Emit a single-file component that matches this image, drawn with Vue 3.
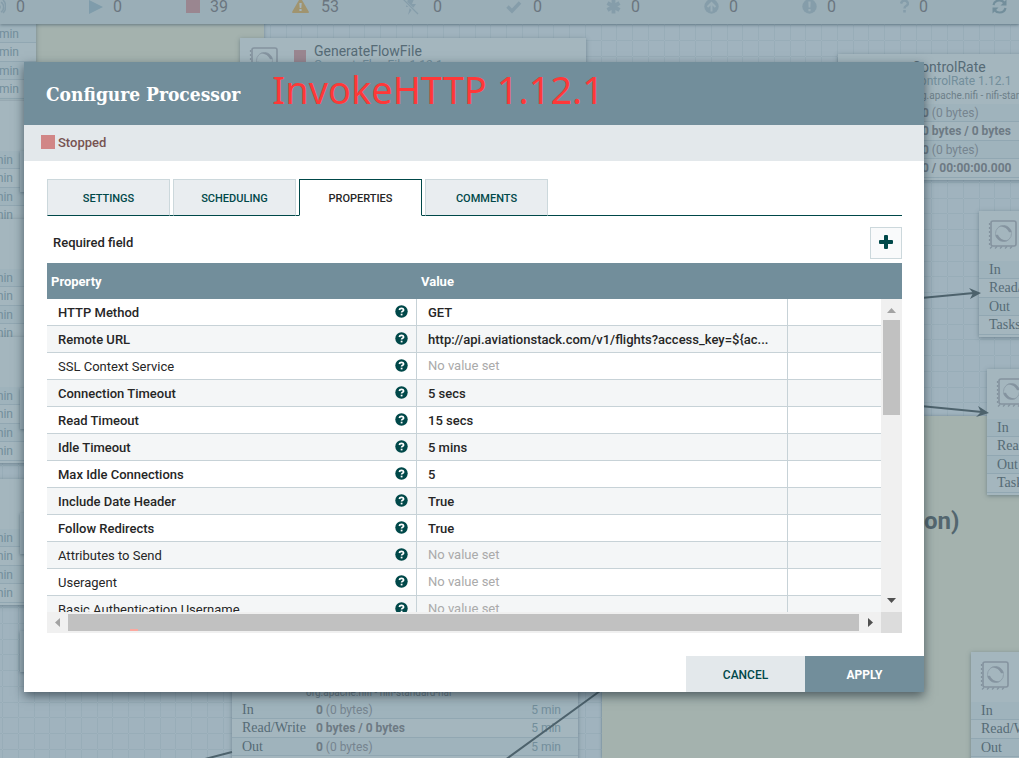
<script setup>
const counters = [
  { icon: 'transmit', value: '0' },
  { icon: 'play', value: '0' },
  { icon: 'stop', value: '39' },
  { icon: 'warning', value: '53' },
  { icon: 'disabled', value: '0' },
  { icon: 'check', value: '0' },
  { icon: 'asterisk', value: '0' },
  { icon: 'up', value: '0' },
  { icon: 'exclaim', value: '0' },
  { icon: 'question', value: '0' },
  { icon: 'refresh', value: '' },
]

const fullRows = [
  { label: 'In', strong: '0', rest: '(0 bytes)' },
  { label: 'Read/Write', strong: '0 bytes / 0 bytes', rest: '' },
  { label: 'Out', strong: '0', rest: '(0 bytes)' },
  { label: 'Tasks/Time', strong: '0 / 00:00:00.000', rest: '' },
]

const bundle = 'org.apache.nifi - nifi-standard-nar'

const processors = [
  { id: 'gen', x: 240, y: 38, name: 'GenerateFlowFile', type: 'GenerateFlowFile 1.12.1', show: [] },
  { id: 'rate', x: 838, y: 54, name: 'ControlRate', type: 'ControlRate 1.12.1', bundle, show: ['value'] },
  { id: 'r1', x: 979, y: 211, show: ['label'] },
  { id: 'r2', x: 987, y: 369, show: ['label'] },
  { id: 'r3', x: 971, y: 652, show: ['label'] },
  { id: 'mid', x: 232, y: 651, bundle, show: ['label', 'value', 'time'] },
  { id: 'l1', x: -310, y: -25, show: ['time'] },
  { id: 'l2', x: -316, y: 101, show: ['time'] },
  { id: 'l3', x: -316, y: 219, show: ['time'] },
  { id: 'l4', x: -316, y: 337, show: ['time'] },
  { id: 'l5', x: -316, y: 479, show: ['time'] },
]

const queues = [151, 388, 513, 631]

const tabs = ['Settings', 'Scheduling', 'Properties', 'Comments']

const properties = [
  { name: 'HTTP Method', value: 'GET', required: true },
  { name: 'Remote URL', value: 'http://api.aviationstack.com/v1/flights?access_key=${ac...', required: true },
  { name: 'SSL Context Service', value: '', required: false },
  { name: 'Connection Timeout', value: '5 secs', required: true },
  { name: 'Read Timeout', value: '15 secs', required: true },
  { name: 'Idle Timeout', value: '5 mins', required: true },
  { name: 'Max Idle Connections', value: '5', required: true },
  { name: 'Include Date Header', value: 'True', required: true },
  { name: 'Follow Redirects', value: 'True', required: true },
  { name: 'Attributes to Send', value: '', required: false },
  { name: 'Useragent', value: '', required: false },
  { name: 'Basic Authentication Username', value: '', required: false },
]
</script>

<template>
  <div class="stage">
    <div class="canvas" aria-hidden="true">
      <svg class="fill" width="100%" height="100%">
        <defs>
          <pattern id="mesh" x="2" y="40" width="63" height="63" patternUnits="userSpaceOnUse">
            <path d="M0 0h1v63h-1zM16 0h1v63h-1zM32 0h1v63h-1zM47 0h1v63h-1zM0 0v1h63v-1zM0 16v1h63v-1zM0 32v1h63v-1zM0 47v1h63v-1z" fill="#98adb8" />
          </pattern>
        </defs>
        <rect width="100%" height="100%" fill="url(#mesh)" />
      </svg>
      <div class="note note-top"></div>
      <div class="note note-main"><span>on)</span></div>

      <div v-for="p in processors" :key="p.id" class="node" :style="{ left: p.x + 'px', top: p.y + 'px' }">
        <div class="node-head">
          <svg class="node-icon" width="29" height="30" viewBox="0 0 29 30" fill="none">
            <rect x="3" y="1" width="25" height="25" rx="2" stroke="#84939f" stroke-width="1.6" />
            <path d="M1.500 3v24" stroke="#84939f" stroke-width="1.200" stroke-dasharray="2 2" />
            <path d="M2 28.500l2-2M7 28.500l2-2M12 28.500l2-2M17 28.500l2-2M22 28.500l2-2" stroke="#84939f" stroke-width="1.200" />
            <circle cx="15.500" cy="13.500" r="8" stroke="#8f9faa" stroke-width="1" />
            <path d="M10 6.800c6-3 12-.5 13.500 5.200l-2.500.3c-1.500-4-6-6.500-11-5.500zM21 20.200c-6 3-12 .5-13.500-5.200l2.500-.3c1.500 4 6 6.500 11 5.500z" fill="#84939f" />
          </svg>
          <span class="node-state"></span>
          <div class="node-names">
            <div class="node-name">{{ p.name }}</div>
            <div class="node-type">{{ p.type }}</div>
            <div class="node-bundle">{{ p.bundle }}</div>
          </div>
        </div>
        <div class="node-rows">
          <div v-for="r in fullRows" :key="r.label" class="node-row">
            <span class="node-label"><template v-if="p.show.includes('label')">{{ r.label }}</template></span>
            <span class="node-value"><template v-if="p.show.includes('value')"><b>{{ r.strong }}</b> {{ r.rest }}</template></span>
            <span class="node-time"><template v-if="p.show.includes('time')">5 min</template></span>
          </div>
        </div>
      </div>
      <div v-for="q in queues" :key="q" class="queue" :style="{ top: q + 'px' }"></div>

      <svg class="fill" width="100%" height="100%">
        <g stroke="#4d626c" stroke-width="2" fill="none">
          <path d="M900 300L974 293M900 404L982 412M600 691L505 760M205 759L232 752" />
        </g>
        <path d="M981 293l-12-5 4 5-3 6zM989 413l-11-7 3 6-5 5z" fill="#4d626c" />
      </svg>
    </div>

    <div class="statusbar">
      <div v-for="c in counters" :key="c.icon" class="counter">
        <svg v-if="c.icon === 'transmit'" width="15" height="16" viewBox="0 0 15 16" fill="none" stroke="#859daa" stroke-width="1.500">
          <circle cx="7" cy="8" r="2" /><path d="M10 3a6 6 0 0 1 0 10M12 1a9 9 0 0 1 0 13" />
        </svg>
        <svg v-else-if="c.icon === 'play'" width="14" height="16" viewBox="0 0 14 16"><path d="M0 1l14 7-14 7z" fill="#7f9cab" /></svg>
        <svg v-else-if="c.icon === 'stop'" width="14" height="16" viewBox="0 0 14 16"><path d="M0 0h14v14H0z" fill="#9a8690" /></svg>
        <svg v-else-if="c.icon === 'warning'" width="19" height="16" viewBox="0 0 19 16">
          <path d="M7.300 0.500q1.200-1.500 2.400 0l7 12q.5 1.500-1 1.500H1.300q-1.500 0-1-1.500z" fill="#a0946f" />
          <path d="M7.300 4h2.400l-.4 5H7.700zM7.400 10h2.200v2H7.400z" fill="#a4b6be" />
        </svg>
        <svg v-else-if="c.icon === 'disabled'" width="20" height="16" viewBox="0 0 20 16">
          <path d="M5 0h6L9 5h4l-8 11 2-8H3z" fill="#859daa" /><path d="M0 1l15 14" stroke="#9aaeb7" stroke-width="3" /><path d="M0 0l15 15" stroke="#859daa" stroke-width="1.200" />
        </svg>
        <svg v-else-if="c.icon === 'check'" width="17" height="16" viewBox="0 0 17 16"><path d="M1.500 7.500l4.500 4.500 8-8.500" fill="none" stroke="#859daa" stroke-width="3.400" /></svg>
        <svg v-else-if="c.icon === 'asterisk'" width="15" height="16" viewBox="0 0 15 16"><path d="M7.500 .5v14M1.500 4l12 7M13.500 4l-12 7" stroke="#859daa" stroke-width="3.800" /></svg>
        <svg v-else-if="c.icon === 'up'" width="15" height="16" viewBox="0 0 15 16">
          <circle cx="7.500" cy="7.500" r="7.200" fill="#859daa" /><path d="M7.500 12.500V4M3.500 8l4-4 4 4" fill="none" stroke="#9aaeb7" stroke-width="2" />
        </svg>
        <svg v-else-if="c.icon === 'exclaim'" width="15" height="16" viewBox="0 0 15 16">
          <circle cx="7.500" cy="7.500" r="7.200" fill="#859daa" /><path d="M6.300 2.500h2.400l-.3 6H6.600zM6.400 10h2.200v2.300H6.400z" fill="#9aaeb7" />
        </svg>
        <svg v-else-if="c.icon === 'question'" width="9" height="16" viewBox="0 0 9 16">
          <path d="M1 4.500q1-3 3.500-3T8 4.300Q8 6 6 7 4.500 7.800 4.500 9.500" fill="none" stroke="#859daa" stroke-width="2.400" /><path d="M3.200 11h2.600v2.500H3.200z" fill="#859daa" />
        </svg>
        <svg v-else width="15" height="16" viewBox="0 0 15 16">
          <path d="M1.500 6q1-4.500 6-4.500 3 0 4.500 2M13.500 9q-1 4.500-6 4.500-3 0-4.500-2" fill="none" stroke="#728e9b" stroke-width="2.200" />
          <path d="M14.500 .5v6h-6zM.5 14.500v-6h6z" fill="#728e9b" />
        </svg>
        <span>{{ c.value }}</span>
      </div>
    </div>

    <div class="overlay">
      <section class="dialog" role="dialog" aria-labelledby="dialog-title">
        <header class="dialog-head">
          <h1 id="dialog-title">Configure Processor</h1>
          <span class="remark">InvokeHTTP 1.12.1</span>
        </header>
        <div class="run-state"><span class="run-square"></span>Stopped</div>

        <div class="dialog-body">
          <div class="tabs" role="tablist">
            <button v-for="t in tabs" :key="t" type="button" role="tab" class="tab" :class="{ active: t === 'Properties' }" :aria-selected="t === 'Properties'">{{ t }}</button>
          </div>
          <div class="toolbar">
            <span class="required-note">Required field</span>
            <button type="button" class="add" aria-label="Add property">
              <svg width="14" height="14" viewBox="0 0 14 14"><path d="M5 1q0-1 1-1h2q1 0 1 1v4h4q1 0 1 1v2q0 1-1 1H9v4q0 1-1 1H6q-1 0-1-1V9H1Q0 9 0 8V6q0-1 1-1h4z" fill="#004849" /></svg>
            </button>
          </div>

          <div class="grid">
            <div class="viewport">
              <table>
                <colgroup><col class="c-name" /><col class="c-value" /><col class="c-actions" /></colgroup>
                <thead>
                  <tr><th scope="col">Property</th><th scope="col">Value</th><th></th></tr>
                </thead>
                <tbody>
                  <tr v-for="p in properties" :key="p.name" :class="{ required: p.required }">
                    <td>
                      <div class="name-cell">
                        <span>{{ p.name }}</span>
                        <svg width="13" height="13" viewBox="0 0 13 13">
                          <circle cx="6.500" cy="6.500" r="6.200" fill="#004849" />
                          <path d="M4.300 5q.3-1.700 2.200-1.700T8.600 4.900q0 .9-1.100 1.400-.9.500-.9 1.300" fill="none" stroke="#fff" stroke-width="1.700" />
                          <path d="M5.700 8.700h1.800v1.700H5.700z" fill="#fff" />
                        </svg>
                      </div>
                    </td>
                    <td class="value" :class="{ unset: !p.value }">{{ p.value || 'No value set' }}</td>
                    <td></td>
                  </tr>
                </tbody>
              </table>
            </div>
            <div class="vbar">
              <svg width="21" height="21" viewBox="0 0 21 21"><path d="M6 14l4.500-5 4.500 5z" fill="#a3a3a3" /></svg>
              <div class="vtrack"><div class="vthumb"></div></div>
              <svg width="21" height="21" viewBox="0 0 21 21"><path d="M6 7h9l-4.500 5z" fill="#505050" /></svg>
            </div>
            <div class="hbar">
              <svg width="21" height="21" viewBox="0 0 21 21"><path d="M13 6v9l-5-4.500z" fill="#a3a3a3" /></svg>
              <div class="hthumb"><span class="speck"></span></div>
              <svg width="22" height="21" viewBox="0 0 22 21"><path d="M9 6v9l5-4.500z" fill="#505050" /></svg>
            </div>
            <div class="corner"></div>
          </div>
        </div>

        <footer class="actions">
          <button type="button" class="cancel">Cancel</button>
          <button type="button" class="apply">Apply</button>
        </footer>
      </section>
    </div>
  </div>
</template>

<style>
html,
body {
  margin: 0;
  background: #a0b3be;
}
</style>

<style scoped>
* {
  box-sizing: border-box;
}
.stage {
  position: relative;
  min-height: 100vh;
  overflow: hidden;
  font-family: Roboto, "Liberation Sans", sans-serif;
  font-size: 13px;
  color: #262626;
}
.canvas,
.fill {
  position: absolute;
  inset: 0;
}
.canvas {
  overflow: hidden;
}
.note {
  position: absolute;
  background: #a4b2ae;
  box-shadow: 0 0 3px rgba(70, 95, 110, 0.5);
}
.note-top {
  left: 36px;
  top: 0;
  width: 228px;
  height: 160px;
}
.note-main {
  left: 602px;
  right: 0;
  top: 416px;
  bottom: 0;
}
.note-main span {
  position: absolute;
  left: 322px;
  top: 90px;
  font-size: 24px;
  line-height: 30px;
  font-weight: 700;
  color: #53666f;
}
.node {
  position: absolute;
  width: 346px;
  background: #a4b6be;
  box-shadow: 0 1px 4px rgba(60, 85, 100, 0.5);
  padding-bottom: 2px;
}
.node-head {
  display: flex;
  height: 50px;
  padding: 4px 0 0 9px;
}
.node-icon {
  margin-top: 5px;
}
.node-state {
  width: 12px;
  height: 12px;
  margin: 8px 8px 0 16px;
  background: #9a8690;
}
.node-names {
  white-space: nowrap;
}
.node-name {
  height: 16px;
  font-size: 14px;
  line-height: 18px;
  color: #566b76;
}
.node-type {
  height: 14px;
  font-size: 12px;
  line-height: 15px;
  color: #728e9b;
}
.node-bundle {
  font-size: 10px;
  line-height: 16px;
  color: #6d7f89;
}
.node-rows {
  display: grid;
  grid-template-rows: 18px 19px 18px 19px;
}
.node-row {
  display: grid;
  grid-template-columns: 74px 1fr auto;
  align-items: center;
  padding: 0 17px 0 10px;
  border-bottom: 1px solid #91a7b2;
  font-size: 12px;
  color: #76848f;
  white-space: nowrap;
}
.node-row:nth-child(odd) {
  background: #9fb3bc;
}
.node-row b {
  font-weight: 700;
  color: #6d7a84;
}
.node-label {
  font-family: "Liberation Serif", serif;
  font-size: 14px;
  line-height: 16px;
  color: #566b76;
}
.node-time {
  color: #728e9b;
}
.queue {
  position: absolute;
  left: 20px;
  width: 200px;
  height: 41px;
  background: #9fb2bb;
  box-shadow: 0 1px 3px rgba(60, 85, 100, 0.5);
}
.statusbar {
  position: relative;
  display: flex;
  align-items: flex-start;
  gap: 64px;
  height: 24px;
  background: #9aaeb7;
  box-shadow: 0 1px 3px rgba(60, 85, 100, 0.6);
}
.counter {
  display: flex;
  flex: none;
  align-items: center;
  gap: 10px;
  margin-top: -1px;
  font-size: 16px;
  line-height: 16px;
  color: #6b7680;
}
.counter:first-child {
  margin-left: -9px;
}
.overlay {
  position: relative;
  display: flex;
  padding: 38px 95px 66px 24px;
}
.dialog {
  flex: 1;
  min-width: 0;
  background: #fff;
  box-shadow: 0 4px 10px rgba(20, 35, 45, 0.6);
}
.dialog-head {
  display: flex;
  align-items: center;
  gap: 32px;
  height: 63px;
  padding: 0 22px;
  background: #728e9b;
  white-space: nowrap;
}
h1 {
  margin: 0;
  font-family: "DejaVu Serif Condensed", "DejaVu Serif", serif;
  font-size: 19px;
  line-height: 24px;
  font-weight: 700;
  color: #fff;
}
.remark {
  font-family: "Noto Sans", sans-serif;
  font-size: 38px;
  line-height: 52px;
  padding-bottom: 10px;
  color: #ff3838;
}
.run-state {
  display: flex;
  align-items: center;
  gap: 3px;
  height: 36px;
  padding: 0 17px 2px;
  background: #e3e8eb;
  font-weight: 500;
  color: #775351;
}
.run-square {
  width: 14px;
  height: 14px;
  background: #d18686;
}
.dialog-body {
  padding: 18px 22px 23px 23px;
}
.tabs {
  display: flex;
  gap: 3px;
  border-bottom: 1px solid #004849;
}
.tab {
  width: 123px;
  height: 37px;
  margin-bottom: -1px;
  padding: 2px 0 0;
  border: 1px solid #ccd8dc;
  border-bottom-color: #004849;
  background: #e9edf0;
  font: 500 11px/16px Roboto, sans-serif;
  text-transform: uppercase;
  color: #004849;
}
.tab.active {
  border-color: #004849;
  border-bottom-color: #fff;
  background: #fff;
  color: #262626;
}
.toolbar {
  display: flex;
  justify-content: space-between;
  align-items: center;
  height: 47px;
  padding: 7px 0 0 6px;
}
.required-note {
  font-weight: 500;
  padding-bottom: 2px;
}
.add {
  display: flex;
  align-items: center;
  justify-content: center;
  width: 32px;
  height: 32px;
  padding: 0 0 2px;
  border: 1px solid #ccd8dc;
  background: #f9fafb;
}
.grid {
  display: grid;
  grid-template-columns: 1fr 21px;
  background: #728e9b;
}
.viewport {
  height: 349px;
  min-width: 0;
  overflow: hidden;
}
table {
  width: 100%;
  table-layout: fixed;
  border-collapse: separate;
  border-spacing: 0;
  background: #fff;
}
.c-name {
  width: 370px;
}
.c-value {
  width: 371px;
}
.c-actions {
  width: 93px;
}
th {
  height: 36px;
  padding: 0 4px;
  background: #728e9b;
  color: #fff;
  font-weight: 700;
  text-align: left;
}
td {
  height: 27px;
  padding: 0 5px 0 11px;
  border-right: 1px solid #c7d2d7;
  border-bottom: 1px solid #c7d2d7;
  overflow: hidden;
  text-overflow: ellipsis;
  white-space: nowrap;
}
td:last-child {
  border-right: 0;
}
tbody tr:nth-child(even) {
  background: #f4f6f7;
}
.required td {
  font-weight: 500;
}
.name-cell {
  display: flex;
  align-items: center;
  justify-content: space-between;
  padding-right: 3px;
}
.name-cell svg {
  margin-bottom: 2px;
}
td.value.unset {
  padding-bottom: 2px;
  color: #aaa;
}
.vbar {
  display: flex;
  flex-direction: column;
  margin-top: 36px;
  background: #f0f0f0;
}
.vtrack {
  flex: 1;
  padding: 0 2px;
}
.vthumb {
  height: 35%;
  background: #c1c1c1;
}
.hbar {
  display: flex;
  align-items: center;
  height: 21px;
  background: #f0f0f0;
}
.hthumb {
  position: relative;
  flex: 1;
  height: 17px;
  background: #c1c1c1;
}
.speck {
  position: absolute;
  left: 62px;
  bottom: 0;
  width: 8px;
  height: 2px;
  background: #fba9a0;
}
.corner {
  background: #dcdcdc;
}
.actions {
  display: flex;
  justify-content: flex-end;
}
.actions button {
  width: 119px;
  height: 36px;
  padding: 2px 0 0;
  border: 0;
  font: 500 12px/16px Roboto, sans-serif;
  text-transform: uppercase;
}
.actions .cancel {
  background: #e3e8eb;
  color: #004849;
}
.actions .apply {
  background: #728e9b;
  color: #fff;
  font-weight: 700;
}
</style>
